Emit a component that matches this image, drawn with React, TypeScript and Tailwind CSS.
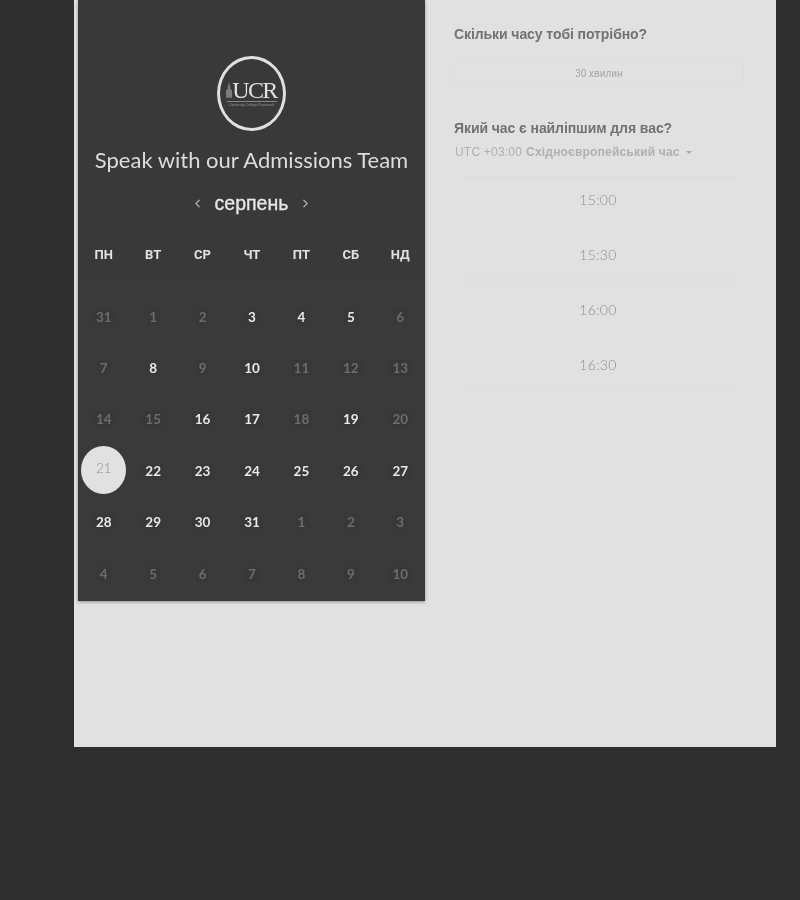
import { ChevronLeft, ChevronRight } from 'lucide-react';

const WEEKDAYS = ['ПН', 'ВТ', 'СР', 'ЧТ', 'ПТ', 'СБ', 'НД'];

// [label, available]
const DAYS: [number, boolean][] = [
  [31, false], [1, false], [2, false], [3, true], [4, true], [5, true], [6, false],
  [7, false], [8, true], [9, false], [10, true], [11, false], [12, false], [13, false],
  [14, false], [15, false], [16, true], [17, true], [18, false], [19, true], [20, false],
  [21, true], [22, true], [23, true], [24, true], [25, true], [26, true], [27, true],
  [28, true], [29, true], [30, true], [31, true], [1, false], [2, false], [3, false],
  [4, false], [5, false], [6, false], [7, false], [8, false], [9, false], [10, false],
];

const SELECTED_INDEX = 21;

const SLOT_GROUPS = [
  ['15:00', '15:30'],
  ['16:00', '16:30'],
];

function Logo() {
  return (
    <div className="flex h-[75px] w-[69px] flex-col items-center justify-center rounded-[50%] border-[3px] border-[#e0e0e0]">
      <div className="flex items-end">
        <svg width="6" height="18" viewBox="0 0 7 18" className="mb-[1px] text-[#7c7c7c]">
          <path d="M3.5 0 L5 5 L5 8 L7 9 L7 18 L0 18 L0 9 L2 8 L2 5 Z" fill="currentColor" />
        </svg>
        <span className="font-['Liberation_Serif',serif] text-[24px] leading-[20px] tracking-[-1.6px] text-[#e0e0e0]">
          UCR
        </span>
      </div>
      <div className="mt-[1px] w-[50px] border-t border-[#858585] pt-[1px] text-center font-['Liberation_Sans',sans-serif] text-[3.5px] leading-[4px] text-[#959595]">
        University College Roosevelt
      </div>
    </div>
  );
}

function CalendarPanel() {
  return (
    <div className="flex h-[601px] w-[347px] shrink-0 flex-col items-center bg-[#393939] pt-[56px] shadow-[0_1px_3px_rgba(0,0,0,0.35)] blur-[0.4px]">
      <Logo />
      <h1 className="mt-[14px] h-[30px] whitespace-nowrap font-['Lato',sans-serif] text-[22px] leading-[30px] font-normal text-[#dcdcdc]">
        Speak with our Admissions Team
      </h1>
      <div className="mt-[14px] flex h-[28px] items-center gap-[11px]">
        <ChevronLeft size={13} strokeWidth={2.5} className="text-[#a8a8a8]" />
        <span className="font-['Liberation_Sans',sans-serif] text-[19.5px] leading-[28px] text-[#e8e8e8] [-webkit-text-stroke:0.3px_#e8e8e8]">
          серпень
        </span>
        <ChevronRight size={13} strokeWidth={2.5} className="text-[#a8a8a8]" />
      </div>
      <div className="mt-[28px] grid h-[20px] w-full grid-cols-7 pl-[1px]">
        {WEEKDAYS.map((day) => (
          <div
            key={day}
            className="text-center font-['Roboto',sans-serif] text-[13px] leading-[20px] font-bold text-[#e2e2e2]"
          >
            {day}
          </div>
        ))}
      </div>
      <div className="mt-[16px] grid w-full grid-cols-7 grid-rows-[repeat(6,51.4px)] bg-[#3a3a3a] pt-[10px] pl-[1px]">
        {DAYS.map(([label, available], i) => {
          if (i === SELECTED_INDEX) {
            return (
              <div key={i} className="flex items-center justify-center">
                <div className="mb-[2px] flex h-[48px] w-[45px] items-center justify-center rounded-[50%] bg-[#e1e1e1] pb-[2px] font-['Lato',sans-serif] text-[13px] font-light text-[#8c8c8c]">
                  {label}
                </div>
              </div>
            );
          }
          return (
            <div key={i} className="flex items-center justify-center">
              <span
                className={
                  available
                    ? "bg-[#383838] px-[3px] font-['Lato',sans-serif] text-[13.5px] leading-[16px] font-bold text-[#e8e8e8]"
                    : "bg-[#383838] px-[3px] font-['Lato',sans-serif] text-[13.5px] leading-[16px] font-bold text-[#6c6c6c]"
                }
              >
                {label}
              </span>
            </div>
          );
        })}
      </div>
    </div>
  );
}

function BookingPanel() {
  return (
    <div className="ml-[29px] w-[290px] shrink-0 pt-[24px] blur-[0.4px]">
      <h2 className="h-[20px] font-['Liberation_Sans',sans-serif] text-[14px] leading-[20px] font-bold tracking-[-0.08px] text-[#727272]">
        Скільки часу тобі потрібно?
      </h2>
      <div className="mt-[15px] flex h-[28px] items-center justify-center rounded-[2px] border border-[#dddddd] font-['Roboto',sans-serif] text-[10px] text-[#a6a6a6]">
        30 хвилин
      </div>
      <h2 className="mt-[31px] h-[20px] font-['Liberation_Sans',sans-serif] text-[14px] leading-[20px] font-bold tracking-[-0.08px] text-[#727272]">
        Який час є найліпшим для вас?
      </h2>
      <div className="mt-[5px] flex h-[18px] items-center pl-[1px] font-['Liberation_Sans',sans-serif] text-[12px] tracking-[0.2px] text-[#b0b0b0]">
        <span>UTC +03:00</span>
        <span className="ml-[4px] font-bold">Східноєвропейський час</span>
        <span className="ml-[6px] h-0 w-0 border-x-[3px] border-t-[3px] border-x-transparent border-t-[#a8a8a8]" />
      </div>
      <div className="mt-[15px] ml-[5px] flex w-[278px] flex-col gap-[7px]">
        {SLOT_GROUPS.map((group) => (
          <div key={group[0]} className="flex flex-col gap-[9px] border-y border-[#dddddd]">
            {group.map((time) => (
              <div
                key={time}
                className="flex h-[46px] items-center justify-center pb-[2px] font-['Lato',sans-serif] text-[14px] font-light tracking-[0.3px] text-[#8f8f8f]"
              >
                {time}
              </div>
            ))}
          </div>
        ))}
      </div>
    </div>
  );
}

export default function App() {
  return (
    <div className="h-[900px] overflow-hidden bg-[#2f2f2f]">
      <div className="ml-[74px] flex h-[747px] w-[702px] bg-[#e1e1e1] pl-[4px]">
        <CalendarPanel />
        <BookingPanel />
      </div>
    </div>
  );
}
